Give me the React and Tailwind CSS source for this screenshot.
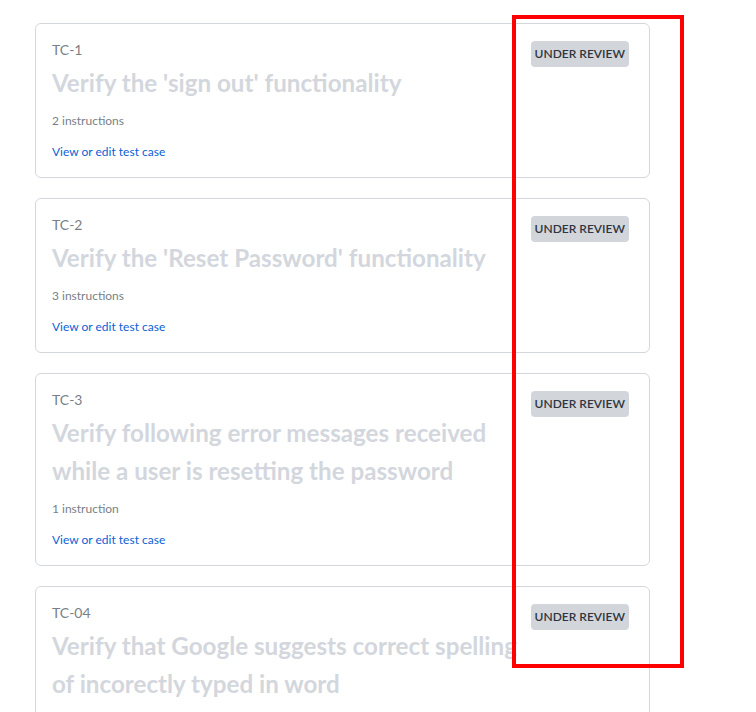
import React from 'react';

const testCases = [
  { id: 'TC-1', title: "Verify the 'sign out' functionality", count: '2 instructions' },
  { id: 'TC-2', title: "Verify the 'Reset Password' functionality", count: '3 instructions' },
  { id: 'TC-3', title: 'Verify following error messages received while a user is resetting the password', count: '1 instruction' },
  { id: 'TC-04', title: 'Verify that Google suggests correct spelling of incorectly typed in word', count: '2 instructions' },
];

function TestCaseCard({ tc }) {
  return (
    <div className="flex gap-3 rounded-md border border-[#d4d7dc] bg-white pt-4 pb-4 pl-4 pr-5">
      <div className="min-w-0 flex-1">
        <p className="text-[14px] leading-5 text-[#7a7f87]">{tc.id}</p>
        <h2 className="mt-[4px] text-[24.2px] font-bold leading-[38px] text-[#d3d7dd]">{tc.title}</h2>
        <p className="mt-[10px] text-[12px] leading-[18px] text-[#7a7f87]">{tc.count}</p>
        <a href="#" className="mt-[13px] block text-[12px] leading-[18px] text-[#0b5fd6]">
          View or edit test case
        </a>
      </div>
      <div className="shrink-0">
        <span className="inline-flex h-[26px] items-center rounded-[4px] bg-[#d2d6db] px-[4px] text-[12px] font-semibold text-[#2f3540]">
          UNDER REVIEW
        </span>
      </div>
    </div>
  );
}

export default function App() {
  return (
    <div className="relative min-h-[712px] bg-white font-['Lato','Liberation_Sans',sans-serif]">
      <div className="flex w-[650px] flex-col gap-[20px] pl-[35px] pt-[23px]">
        {testCases.map((tc) => (
          <TestCaseCard key={tc.id} tc={tc} />
        ))}
      </div>
      {/* annotation box */}
      <div className="pointer-events-none absolute left-[512px] top-[15px] h-[653px] w-[172px] border-4 border-[#ff0000]" />
    </div>
  );
}
